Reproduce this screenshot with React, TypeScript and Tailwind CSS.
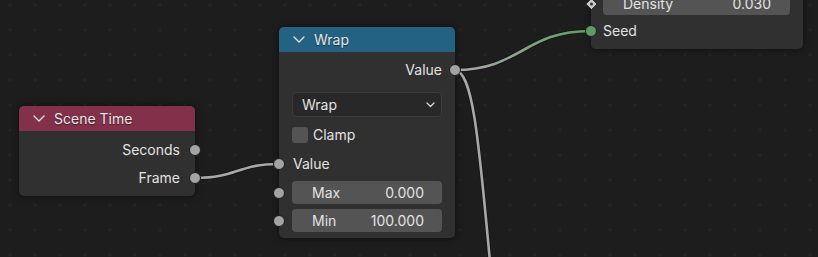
import React from 'react';

const Chevron: React.FC<{ small?: boolean }> = ({ small }) =>
  small ? (
    <svg width="9" height="6" viewBox="0 0 9 6" className="shrink-0">
      <polyline points="1,1 4.5,4.5 8,1" fill="none" stroke="#d8d8d8" strokeWidth="1.3" strokeLinecap="round" strokeLinejoin="round" />
    </svg>
  ) : (
    <svg width="12" height="7" viewBox="0 0 12 7" className="shrink-0">
      <polyline points="1,1 6,6 11,1" fill="none" stroke="#e4e4e4" strokeWidth="1.3" strokeLinecap="round" strokeLinejoin="round" />
    </svg>
  );

// socket dot sitting on the node border
const Socket: React.FC<{ side: 'left' | 'right'; color?: string }> = ({ side, color = 'bg-[#a3a3a3]' }) => (
  <span
    className={`absolute top-1/2 -translate-y-1/2 w-[12px] h-[12px] rounded-full border border-[#1c1c1c] ${color} ${
      side === 'left' ? '-left-[6px]' : '-right-[6px]'
    }`}
  />
);

const Header: React.FC<{ title: string; bg: string }> = ({ title, bg }) => (
  <div className={`h-[25px] flex items-center gap-[9px] pl-[14px] rounded-t-[5px] ${bg}`}>
    <Chevron />
    <span className="text-[#e6e6e6] [text-shadow:0_1px_1px_rgba(0,0,0,0.5)]">{title}</span>
  </div>
);

const Field: React.FC<{ label: string; value: string; className?: string }> = ({ label, value, className }) => (
  <div className={`h-[23px] rounded-[4px] bg-[#545454] flex items-center justify-between pl-[20px] pr-[18px] text-[#e2e2e2] ${className ?? ''}`}>
    <span>{label}</span>
    <span>{value}</span>
  </div>
);

const App: React.FC = () => {
  return (
    <div
      className="relative w-[818px] h-[257px] overflow-hidden bg-[#1d1d1d] bg-[radial-gradient(circle,#262626_1px,transparent_1.6px)] bg-size-[25px_25px] bg-position-[-2.5px_-7.5px] text-[14px] leading-none"
      style={{ fontFamily: 'Inter, "Noto Sans", sans-serif' }}
    >
      {/* links */}
      <svg className="absolute inset-0" width="818" height="257">
        <defs>
          <linearGradient id="seedLink" gradientUnits="userSpaceOnUse" x1="455" y1="0" x2="590" y2="0">
            <stop offset="0" stopColor="#aaaaaa" />
            <stop offset="1" stopColor="#5e9c62" />
          </linearGradient>
        </defs>
        <g fill="none" strokeLinecap="round">
          <path d="M195 178 C237 178 237 164 279 164" stroke="#161616" strokeWidth="4.5" />
          <path d="M195 178 C237 178 237 164 279 164" stroke="#a8a8a8" strokeWidth="2.6" />
          <path d="M455 70 C472 72 478 130 490 262" stroke="#161616" strokeWidth="4.5" />
          <path d="M455 70 C472 72 478 130 490 262" stroke="#a8a8a8" strokeWidth="2.6" />
          <path d="M455 70 C520 70 525 31 590 31" stroke="#161616" strokeWidth="4.5" />
          <path d="M455 70 C520 70 525 31 590 31" stroke="url(#seedLink)" strokeWidth="2.6" />
        </g>
      </svg>

      {/* Scene Time node */}
      <div className="absolute left-[19px] top-[106px] w-[176px] h-[90px] rounded-[5px] bg-[#303030] shadow-[0_0_6px_rgba(0,0,0,0.55)]">
        <Header title="Scene Time" bg="bg-[#83314a]" />
        <div className="flex flex-col gap-[4px] pt-[7px] text-[#e2e2e2]">
          <div className="relative h-[24px] flex items-center justify-end pr-[15px]">
            Seconds
            <Socket side="right" />
          </div>
          <div className="relative h-[24px] flex items-center justify-end pr-[15px]">
            Frame
            <Socket side="right" />
          </div>
        </div>
      </div>

      {/* Wrap node */}
      <div className="absolute left-[279px] top-[27px] w-[176px] h-[211px] rounded-[5px] bg-[#303030] shadow-[0_0_6px_rgba(0,0,0,0.55)]">
        <Header title="Wrap" bg="bg-[#246283]" />
        <div className="flex flex-col text-[#e2e2e2]">
          <div className="relative mt-[6px] h-[24px] flex items-center justify-end pr-[13px]">
            Value
            <Socket side="right" />
          </div>
          <div className="mx-[13px] mt-[10px] h-[25px] rounded-[4px] bg-[#282828] border border-[#3c3c3c] flex items-center justify-between pl-[9px] pr-[6px]">
            <span>Wrap</span>
            <Chevron small />
          </div>
          <div className="mx-[13px] mt-[7px] h-[22px] flex items-center gap-[5px]">
            <span className="w-[16px] h-[16px] rounded-[3px] bg-[#545454]" />
            <span>Clamp</span>
          </div>
          <div className="relative mt-[7px] h-[22px] flex items-center pl-[14px]">
            Value
            <Socket side="left" />
          </div>
          <div className="relative mt-[6px] mx-[13px]">
            <Field label="Max" value="0.000" />
            <span className="absolute top-1/2 -translate-y-1/2 -left-[19px] w-[12px] h-[12px] rounded-full border border-[#1c1c1c] bg-[#a3a3a3]" />
          </div>
          <div className="relative mt-[5px] mx-[13px]">
            <Field label="Min" value="100.000" />
            <span className="absolute top-1/2 -translate-y-1/2 -left-[19px] w-[12px] h-[12px] rounded-full border border-[#1c1c1c] bg-[#a3a3a3]" />
          </div>
        </div>
      </div>

      {/* partially visible node, top right */}
      <div className="absolute left-[591px] -top-[20px] w-[212px] h-[69px] rounded-[5px] bg-[#303030] shadow-[0_0_6px_rgba(0,0,0,0.55)]">
        <div className="relative mt-[12px] ml-[12px] mr-[13px]">
          <Field label="Density" value="0.030" className="pr-[19px]" />
          <svg width="13" height="13" viewBox="0 0 13 13" className="absolute top-1/2 -translate-y-1/2 -left-[18.5px]">
            <path d="M6.5 0.8 L12.2 6.5 L6.5 12.2 L0.8 6.5 Z" fill="#c9c9c9" stroke="#1c1c1c" strokeWidth="1" />
            <circle cx="6.5" cy="6.5" r="1.5" fill="#303030" />
          </svg>
        </div>
        <div className="relative mt-[5px] h-[22px] flex items-center pl-[12px] text-[#e2e2e2]">
          Seed
          <Socket side="left" color="bg-[#5e9c62]" />
        </div>
      </div>
    </div>
  );
};

export default App;
